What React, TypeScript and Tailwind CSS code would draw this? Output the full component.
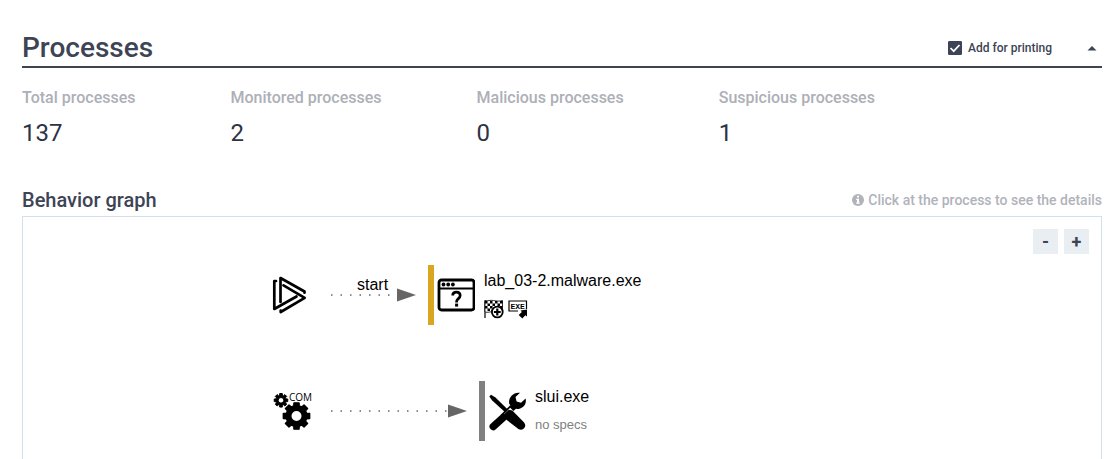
import { useState, type ReactNode } from 'react';

const stats = [
  { label: 'Total processes', value: 137 },
  { label: 'Monitored processes', value: 2 },
  { label: 'Malicious processes', value: 0 },
  { label: 'Suspicious processes', value: 1 },
];

function gearPath(cx: number, cy: number, outer: number, inner: number, hole: number) {
  const points: string[] = [];
  for (let i = 0; i < 8; i++) {
    const mid = (i * Math.PI) / 4;
    const corners: [number, number][] = [
      [inner, -0.27],
      [outer, -0.19],
      [outer, 0.19],
      [inner, 0.27],
    ];
    for (const [r, offset] of corners) {
      const x = cx + r * Math.cos(mid + offset);
      const y = cy + r * Math.sin(mid + offset);
      points.push(`${x.toFixed(2)} ${y.toFixed(2)}`);
    }
  }
  return `M${points.join('L')}ZM${cx - hole} ${cy}a${hole} ${hole} 0 1 0 ${hole * 2} 0a${hole} ${hole} 0 1 0 ${-hole * 2} 0Z`;
}

function StartIcon() {
  return (
    <svg width="36" height="40" viewBox="0 0 36 40" fill="none" stroke="#000" strokeWidth="2.7" strokeLinecap="round" strokeLinejoin="round" aria-hidden="true">
      <path d="M8.500 26V2L32.500 15.500v1.200" />
      <path d="M11.500 9.300L32.700 21.800 8.700 36v-1.500" />
      <path d="M4 5H2.300v28L24.500 20.500" />
    </svg>
  );
}

function ComIcon() {
  return (
    <svg width="40" height="40" viewBox="0 0 40 40" aria-hidden="true">
      <path fillRule="evenodd" stroke="#000" strokeWidth="1.400" strokeLinejoin="round" d={gearPath(23.5, 25, 13.4, 10.4, 5.7)} />
      <path fillRule="evenodd" stroke="#000" strokeWidth="1" strokeLinejoin="round" d={gearPath(8, 9.3, 6.9, 5.2, 2.8)} />
      <text x="16" y="10" className="font-['Open_Sans',sans-serif] text-[10px]">COM</text>
    </svg>
  );
}

function WindowIcon() {
  return (
    <svg width="38" height="34" viewBox="0 0 38 34" aria-hidden="true">
      <rect x="2" y="2" width="35" height="30" rx="2.5" fill="none" stroke="#000" strokeWidth="2.8" />
      <path d="M2 10.500h34" stroke="#000" strokeWidth="2" />
      <circle cx="6.500" cy="6.500" r="1.900" />
      <circle cx="11.200" cy="6.500" r="1.900" />
      <circle cx="15.900" cy="6.500" r="1.900" />
      <path d="M15.700 17.600c0-2.200 1.400-3.500 3.700-3.500s3.800 1.300 3.800 3.400c0 3-3.600 3.200-3.600 6v.9" fill="none" stroke="#000" strokeWidth="2.700" />
      <rect x="18.100" y="25.600" width="3" height="3" />
    </svg>
  );
}

function ToolsIcon() {
  return (
    <svg width="39" height="39" viewBox="-1 0 39 39" aria-hidden="true">
      <path d="M4.300 34.500L14 25.800" stroke="#000" strokeWidth="7.500" strokeLinecap="round" />
      <path d="M14 25L26 13" stroke="#000" strokeWidth="6.500" />
      <path d="M31 0.800L26.500 5.100l1.100 4.400 4.400 1.200 4.600-4.200c1.200 4.500-1.400 9-6.200 10.200-2.300.5-4.400.1-6.100-.9l-4-3.800C18.800 5.700 24.500-.500 31 .8Z" />
      <path d="M18 19L31 32" stroke="#fff" strokeWidth="9" />
      <path d="M0.300 4.400L2 2.800l4.500 2.700L19 17.800l-2.600 2.600L3.200 8.600Z" />
      <path d="M14.500 22.800l5.300-5 3.500 0.800 11.600 11.600c2 2.400 1.700 4.500-.1 6.200-2.100 1.800-4.500 1.600-6.700-.4L15.200 26Z" />
    </svg>
  );
}

function FlagIcon() {
  return (
    <svg width="20" height="20" viewBox="0 0 20 20" aria-hidden="true">
      <path d="M1 19V1.500" stroke="#000" strokeWidth="1.200" />
      <path d="M1 1.500c3 1 5-.8 8.500 0s6 .8 9 0v11.500c-3 .8-5.500.7-9 0s-5.500 1-8.500 0Z" fill="#fff" stroke="#000" strokeWidth="0.800" />
      <path d="M1 2h2.500v2.500H1zM6 2h2.500v2.500H6zM11 2h2.500v2.500H11zM16 2h2.500v2.500H16zM3.500 4.500H6V7H3.500zM8.500 4.500H11V7H8.500zM13.500 4.500H16V7h-2.500zM1 7h2.500v2.500H1zM6 7h2.500v2.500H6zM11 7h2.500v2.500H11zM16 7h2.500v2.500H16zM3.500 9.500H6V12H3.500z" />
      <circle cx="13.300" cy="13" r="5.400" fill="#fff" stroke="#000" strokeWidth="1.800" />
      <path d="M13.300 9.600v6.800M9.900 13h6.800" stroke="#000" strokeWidth="2.200" />
    </svg>
  );
}

function ExeIcon() {
  return (
    <svg width="20" height="20" viewBox="0 0 20 20" aria-hidden="true">
      <path d="M10 12H1V2h17.500v8" fill="none" stroke="#000" strokeWidth="1.200" />
      <text x="2.500" y="10" className="font-['Liberation_Mono',monospace] text-[8px] font-bold">EXE</text>
      <path d="M12.500 11.500l6.500-1v7l-1.700-1.200-3 3.200-3.600-3.500 3.200-2.900Z" />
    </svg>
  );
}

function Arrow({ dots, shaft, label }: { dots: number; shaft: number; label?: string }) {
  return (
    <div className="relative">
      {label && <span className="absolute bottom-[5px] left-[26px] leading-6">{label}</span>}
      <svg width={shaft + 19} height="14" viewBox={`0 0 ${shaft + 19} 14`} className="block" aria-hidden="true">
        {Array.from({ length: dots }, (_, i) => (
          <rect key={i} x={i * 9.5} y="6.300" width="1.500" height="1.500" fill="#666" />
        ))}
        <path d={`M${shaft} 0.500L${shaft + 19} 7L${shaft} 13.500Z`} fill="#666" />
      </svg>
    </div>
  );
}

function ProcessNode({ icon, name, accent, children }: { icon: ReactNode; name: string; accent: string; children: ReactNode }) {
  return (
    <button type="button" className="flex h-[60px] cursor-pointer text-left">
      <span className={`h-full w-1.5 ${accent}`} />
      <span className="flex h-full w-[50px] items-center pl-[3px]">{icon}</span>
      <span className="flex flex-col pt-1">
        <span className="leading-6">{name}</span>
        {children}
      </span>
    </button>
  );
}

export default function App() {
  const [open, setOpen] = useState(true);
  const [zoom, setZoom] = useState(1);

  return (
    <main className="flex min-h-screen flex-col bg-white pr-[10px] pl-[22px] pt-[30px] font-[Roboto,sans-serif] text-[#3d4455]">
      <header className="flex items-center border-b-2 border-[#3d4455]">
        <h1 className="text-[28px] leading-9 font-medium">Processes</h1>
        <label className="ml-auto flex items-center gap-1.5 text-xs font-medium">
          <span className="grid size-[14px]">
            <input type="checkbox" defaultChecked className="peer col-start-1 row-start-1 size-[14px] appearance-none rounded-[1px] border border-[#3d4455] checked:bg-[#3d4455]" />
            <svg viewBox="0 0 14 14" className="pointer-events-none col-start-1 row-start-1 hidden size-[14px] peer-checked:block" fill="none" stroke="#fff" strokeWidth="1.700" aria-hidden="true">
              <path d="M2.500 7l3.200 3.200L11.500 4" />
            </svg>
          </span>
          Add for printing
        </label>
        <button type="button" aria-label="Toggle processes" aria-expanded={open} onClick={() => setOpen(!open)} className="ml-[30px] flex h-6 w-5 items-center justify-center">
          <svg width="10" height="5" viewBox="0 0 10 5" fill="#3d4455" aria-hidden="true"><path d="M0.500 4.500L5 0l4.500 4.500Z" /></svg>
        </button>
      </header>

      {open && (
        <>
          <dl className="flex gap-[95px] pt-[18px]">
            {stats.map((s) => (
              <div key={s.label}>
                <dt className="text-base leading-6 font-medium text-[#adb0b7]">{s.label}</dt>
                <dd className="pt-[7px] text-2xl leading-8 text-[#2d3344]">{s.value}</dd>
              </div>
            ))}
          </dl>

          <div className="mt-[35px] flex items-center justify-between">
            <h2 className="text-xl leading-8 font-medium">Behavior graph</h2>
            <p className="flex items-center gap-1 text-sm font-medium text-[#b1b3ba]">
              <svg width="12" height="12" viewBox="0 0 12 12" aria-hidden="true">
                <circle cx="6" cy="6" r="6" fill="#b1b3ba" />
                <path d="M5 1.800h2v1.700H5zM4.200 4.700H7v3.800h.8v1.300H4.200V8.500H5V6h-.8Z" fill="#fff" />
              </svg>
              Click at the process to see the details
            </p>
          </div>

          <section aria-label="Behavior graph" className="relative min-h-[243px] flex-1 overflow-hidden border border-b-0 border-[#d3e0eb]">
            <div className="origin-top-left font-['Liberation_Sans',sans-serif] text-base text-black" style={zoom === 1 ? undefined : { scale: zoom }}>
              <div className="absolute left-[249px] top-[59px]"><StartIcon /></div>
              <div className="absolute left-[308px] top-[71px]"><Arrow dots={7} shaft={66} label="start" /></div>
              <div className="absolute left-[405px] top-12">
                <ProcessNode icon={<WindowIcon />} name="lab_03-2.malware.exe" accent="bg-[#daa520]">
                  <span className="flex gap-1 pt-1.5"><FlagIcon /><ExeIcon /></span>
                </ProcessNode>
              </div>
              <div className="absolute left-[250px] top-[174px]"><ComIcon /></div>
              <div className="absolute left-[308px] top-[187px]"><Arrow dots={13} shaft={117} /></div>
              <div className="absolute left-[456px] top-[164px]">
                <ProcessNode icon={<ToolsIcon />} name="slui.exe" accent="bg-[#808080]">
                  <span className="pt-1 text-[13px] leading-6 text-[#808080]">no specs</span>
                </ProcessNode>
              </div>
            </div>
            <div className="absolute top-3 right-3 flex gap-1.5 text-lg leading-6 font-bold">
              <button type="button" aria-label="Zoom out" onClick={() => setZoom(Math.max(0.5, zoom - 0.25))} className="size-[25px] bg-[#e9eef3]">-</button>
              <button type="button" aria-label="Zoom in" onClick={() => setZoom(Math.min(2, zoom + 0.25))} className="size-[25px] bg-[#e9eef3]">+</button>
            </div>
          </section>
        </>
      )}
    </main>
  );
}
